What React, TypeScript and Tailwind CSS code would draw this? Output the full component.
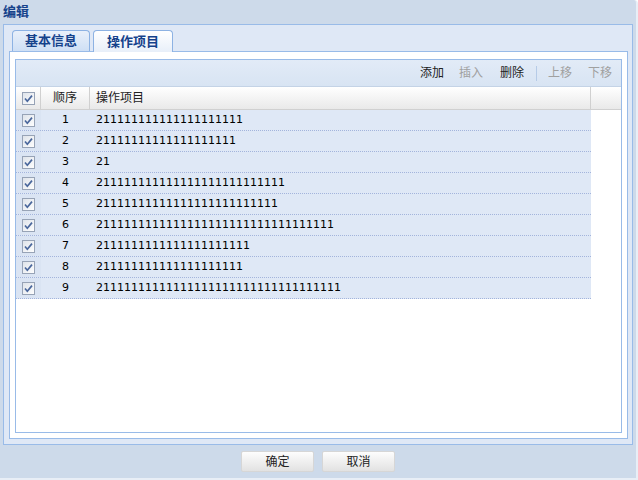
import React from 'react';

const rows = [21, 20, 2, 27, 26, 34, 22, 21, 35].map((n, i) => ({
  no: i + 1,
  text: '2' + '1'.repeat(n - 1),
}));

const Check = () => (
  <svg width="13" height="13" viewBox="0 0 13 13" className="block">
    <defs>
      <linearGradient id="cb" x1="0" y1="0" x2="1" y2="1">
        <stop offset="0" stopColor="#dde2e9" />
        <stop offset="1" stopColor="#ffffff" />
      </linearGradient>
    </defs>
    <rect x="0.5" y="0.5" width="12" height="12" fill="url(#cb)" stroke="#97a3b6" />
    <path d="M3 6.5 L5.3 9.2 L10 3.6" fill="none" stroke="#4a679c" strokeWidth="1.7" />
  </svg>
);

const ToolBtn = ({ label, disabled, className }: { label: string; disabled?: boolean; className?: string }) => (
  <span className={`${disabled ? 'text-[#a0a0a0]' : 'text-[#222]'} ${className ?? ''}`}>{label}</span>
);

const FooterBtn = ({ label }: { label: string }) => (
  <button className="w-[73px] h-[21px] rounded-[2px] border border-[#d6d6d6] bg-gradient-to-b from-[#fdfdfd] to-[#e2e2e2] text-[12px] text-[#222]">
    {label}
  </button>
);

export default function App() {
  return (
    <div
      className="w-[638px] h-[480px] bg-[#cddaea] flex flex-col rounded-tr-[4px] border-r-[2px] border-b-[2px] border-[#e8eef6]"
      style={{ fontFamily: '"DejaVu Sans", "Noto Sans CJK SC", sans-serif' }}
    >
      <div className="h-[24px] px-[3px] flex items-center text-[13px] font-bold text-[#15428b]">编辑</div>

      <div className="mx-[3px] h-[421px] border border-[#99bbe8] bg-[#dfe8f6] flex flex-col">
        {/* tab strip */}
        <div className="h-[26px] pt-[5px] pl-[8px] flex items-end gap-[3px] text-[13px] font-bold text-[#15428b]">
          <div className="w-[78px] h-[21px] rounded-t-[4px] border border-b-0 border-[#8db2e3] bg-gradient-to-b from-[#e9f0fa] to-[#cedff5] flex items-center justify-center">
            基本信息
          </div>
          <div className="w-[80px] h-[22px] rounded-t-[4px] border border-b-0 border-[#8db2e3] bg-gradient-to-b from-[#ffffff] to-[#e8eff9] flex items-center justify-center relative top-[1px]">
            操作项目
          </div>
        </div>

        {/* tab body */}
        <div className="ml-[5px] mr-[4px] h-[388px] border border-[#99bbe8] bg-white px-[5px] pt-[7px] pb-[5px] flex flex-col">
          <div className="flex-1 border border-[#99bbe8] bg-white flex flex-col">
            {/* toolbar */}
            <div className="h-[27px] bg-gradient-to-b from-[#e2ebf7] to-[#d8e4f3] border-b border-[#c4d3e6] flex items-center justify-end pr-[9px] text-[12px]">
              <ToolBtn label="添加" />
              <ToolBtn label="插入" disabled className="ml-[15px]" />
              <ToolBtn label="删除" className="ml-[17px]" />
              <span className="w-[1px] h-[15px] bg-[#b6cbe7] ml-[12px]" />
              <ToolBtn label="上移" disabled className="ml-[11px]" />
              <ToolBtn label="下移" disabled className="ml-[16px]" />
            </div>

            {/* header */}
            <div className="h-[23px] flex bg-gradient-to-b from-white to-[#e9e9e9] border-b border-[#d0d0d0] text-[12px] text-[#222]">
              <div className="w-[25px] border-r border-[#d0d0d0] flex items-center justify-center">
                <Check />
              </div>
              <div className="w-[49px] border-r border-[#d0d0d0] flex items-center justify-center">顺序</div>
              <div className="w-[501px] border-r border-[#d0d0d0] flex items-center pl-[6px]">操作项目</div>
              <div className="flex-1" />
            </div>

            {/* rows */}
            <div className="flex flex-col">
              {rows.map((r) => (
                <div
                  key={r.no}
                  className="w-[575px] h-[21px] flex bg-[#dfe8f6] border-b border-dotted border-[#a3b4dc] text-[11px] text-black"
                >
                  <div className="w-[25px] flex items-center justify-center bg-[#dae4f3]">
                    <Check />
                  </div>
                  <div className="w-[49px] flex items-center justify-center">{r.no}</div>
                  <div className="flex-1 flex items-center pl-[6px]">{r.text}</div>
                </div>
              ))}
            </div>
          </div>
        </div>
      </div>

      {/* footer */}
      <div className="flex-1 flex justify-center items-start pt-[6px] gap-[8px]">
        <FooterBtn label="确定" />
        <FooterBtn label="取消" />
      </div>
    </div>
  );
}
